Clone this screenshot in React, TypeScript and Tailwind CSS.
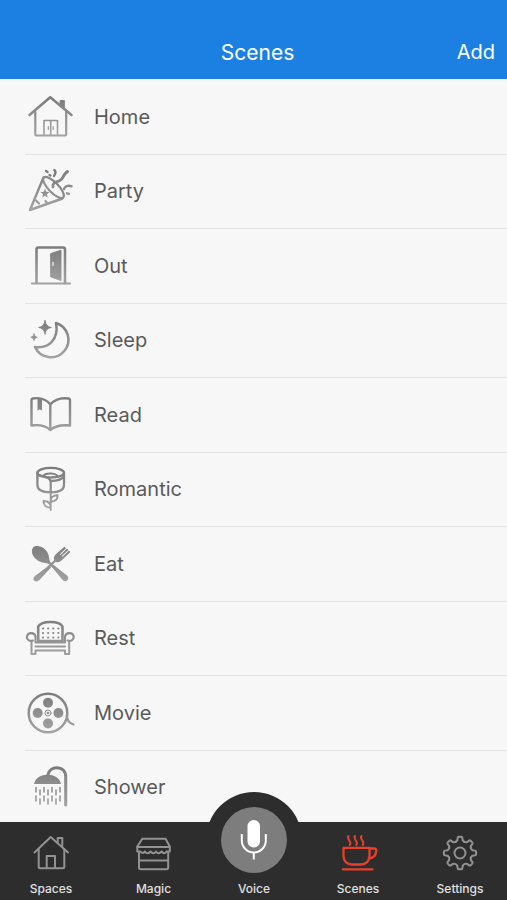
import type { ReactNode } from "react";

interface Item {
  name: string;
  icon: ReactNode;
}

const DROPS_HIGH = [11, 19, 27, 35];
const DROPS_LOW = [15, 23, 31];

// eight rounded teeth around a 40x40 box
function gearPath() {
  const at = (r: number, deg: number) => {
    const a = ((deg - 90) * Math.PI) / 180;
    return `${(20 + r * Math.cos(a)).toFixed(2)} ${(20 + r * Math.sin(a)).toFixed(2)}`;
  };
  let d = `M${at(13, -12)}`;
  for (let i = 0; i < 8; i++) {
    const c = i * 45;
    d += `L${at(15.2, c - 9)}Q${at(16.2, c - 8)} ${at(16.2, c - 4)}L${at(16.2, c + 4)}`;
    d += `Q${at(16.2, c + 8)} ${at(15.2, c + 9)}L${at(13, c + 12)}Q${at(10.8, c + 22.5)} ${at(13, c + 33)}`;
  }
  return d + "Z";
}

const scenes: Item[] = [
  {
    name: "Home",
    icon: (
      <>
        <path d="M4.500 23 25.200 5.300 46.500 23" strokeWidth="2.600" />
        <path d="M10.300 20V42Q10.300 43.500 11.800 43.500H39.700Q41.200 43.500 41.200 42V20" />
        <path d="M35.500 9H39V16L35.500 13Z" fill="url(#metal)" strokeWidth="1.800" />
        <path d="M19 43V28.500H32.500V43M25.700 29V43" strokeWidth="1.600" />
        <path d="M23.300 34.500V37.500M28.100 34.500V37.500" strokeWidth="1.200" />
      </>
    ),
  },
  {
    name: "Party",
    icon: (
      <>
        <path d="M18.500 11.500 5 44 37.500 32.500" strokeWidth="2.400" />
        <ellipse cx="28.500" cy="21.500" rx="14" ry="5" transform="rotate(46 28.500 21.500)" strokeWidth="2.200" />
        <path d="M28 21C27 15 33 16.500 35.500 14C39 12 37 9.500 42.500 5.500" strokeWidth="2.800" />
        <path d="M29.300 4C31.800 6 30 8.500 29 10M39 23C40 20 43 19 46.500 20.300M21 5 22.500 6M24.500 9 25.500 9.500M42 27.300 44 27.800" strokeWidth="2.400" />
        <path d="M20 22.500 21.200 25.700 24.500 26 21.900 28.200 22.700 31.500 20 29.700 17.200 31.500 18.100 28.200 15.500 26 18.800 25.700Z" fill="url(#metal)" stroke="none" />
        <path d="M11 34.500 14 37.500M20.500 35 22.500 37.500" strokeWidth="2.200" />
      </>
    ),
  },
  {
    name: "Out",
    icon: (
      <>
        <path d="M11.500 42V8.500Q11.500 6.500 13.500 6.500H38Q40 6.500 40 8.500V42" strokeWidth="2.600" />
        <path d="M7 42.500H45" strokeWidth="2.200" />
        <path d="M26 12.500 36 9.200V39.500L26 36Z" fill="url(#metal)" strokeWidth="1" />
        <path d="M28 21.500V24.500" stroke="#e5e5e5" strokeWidth="1.500" />
      </>
    ),
  },
  {
    name: "Sleep",
    icon: (
      <>
        <path d="M31 8A17.500 17.500 0 1 1 10 32C24 34 34 24 31 8Z" strokeWidth="2.500" />
        <path d="M20 5.500Q20.700 11.800 26.500 12.500Q20.700 13.200 20 19.500Q19.300 13.200 13.500 12.500Q19.300 11.800 20 5.500ZM9 19Q9.300 22 12.200 22.300Q9.300 22.600 9 25.600Q8.700 22.600 5.800 22.300Q8.700 22 9 19Z" fill="url(#metal)" strokeWidth=".8" />
      </>
    ),
  },
  {
    name: "Read",
    icon: (
      <>
        <path d="M25.300 14.500C21 9 14 7.500 7.800 8.500Q6.500 8.800 6.500 10V35.500C14 34.500 21 36 25.300 40C30 36 37 34.500 45 35.500V10Q45 8.800 43.700 8.500C37 7.500 30 9 25.300 14.500V39" strokeWidth="2.400" />
        <path d="M12.500 9H17V20.800L14.800 19.300L12.500 20.800Z" fill="url(#metal)" stroke="none" />
      </>
    ),
  },
  {
    name: "Romantic",
    icon: (
      <>
        <ellipse cx="25.700" cy="8.700" rx="13.300" ry="4.800" strokeWidth="2.300" />
        <path d="M12.400 9V21C12.400 25.500 17 28.300 25.700 28.300S39 25.500 39 21V9M12.400 10.500C17 13 25.700 12 25.700 18.500V28M39 11.500C37 16 30 17 26 17" strokeWidth="2.300" />
        <path d="M18.500 11.500C21 8.500 31.500 8.500 33 13" strokeWidth="2" />
        <path d="M25.700 28V46M25.700 37.500C25.500 33.500 28 31.300 32.600 31.300C32.800 35.500 30 37.800 25.700 37.500ZM25.700 43.500C21.500 44 18.500 41.500 18.500 37C23 37 25.700 39 25.700 43.500Z" strokeWidth="1.900" />
      </>
    ),
  },
  {
    name: "Eat",
    icon: (
      <>
        <path d="M8 8.500C12.500 5 19.500 8.500 22.500 13.500C24.500 17 23.500 20 25.500 23.500L24 25C20.500 23.300 17.500 24 14 22.200C8.500 19.500 5 13 8 8.500Z" fill="url(#metal)" stroke="none" />
        <path d="M24 23.500 28.500 28M31 21 23.500 28" strokeWidth="2.200" />
        <path d="M28 25.500 42 36.500Q44.500 39.500 42 41.500Q39.500 43.300 37 40.300L26.500 27.500ZM24 26.500 10 37Q7.200 39.500 9.200 41.800Q12 43.500 14.500 41L26 28.500Z" fill="url(#metal)" stroke="none" />
        <path d="M39.500 7.800 31 15Q28 18 29.300 21.200L31.200 23Q34 24 37 21L45.300 13 44 11.600 37.500 17.800 36.800 17.100 43.300 10.900 42 9.600 35.600 15.900 34.900 15.200 40.900 9.200Z" fill="url(#metal)" stroke="none" />
      </>
    ),
  },
  {
    name: "Rest",
    icon: (
      <>
        <path d="M13.200 28V13.500C15 10.500 19 9 25.300 9S36 10.500 37.500 13.500V28Z" strokeWidth="2.600" />
        <path d="M8 27.500C4 29 1.500 26 2 23.300C3 19 9.500 19 10.500 23.500V29.500H40V23.500C41 19 47.500 19 48.700 23.300C49 26 46.500 29 42.500 27.500" strokeWidth="2.100" />
        <path d="M6.500 28V41H10.500V37.500H40V41H44.200V28M10.500 33.500H40" strokeWidth="2" />
        <path d="M18 15.500H33.500M18 20H33.500M18 24.500H33.500" strokeWidth="2.200" strokeDasharray=".100 5" />
      </>
    ),
  },
  {
    name: "Movie",
    icon: (
      <>
        <circle cx="23" cy="25" r="19.300" strokeWidth="2.500" />
        <g fill="url(#metal)" stroke="none">
          <circle cx="23" cy="14.800" r="5" />
          <circle cx="12.700" cy="25" r="5" />
          <circle cx="33.400" cy="25" r="5" />
          <circle cx="23" cy="35.400" r="5" />
          <circle cx="23" cy="25" r="1.300" />
        </g>
        <circle cx="23" cy="25" r="3" strokeWidth="1" />
        <path d="M41.800 27C42 32 45 35.500 48.500 36.500" strokeWidth="2.200" />
      </>
    ),
  },
  {
    name: "Shower",
    icon: (
      <>
        <path d="M9 22C10.500 15.500 16 12.700 22.500 12.700S34.500 15.500 36 22Z" fill="url(#metal)" stroke="none" />
        <path d="M22.800 13C24 8 28 5.800 31.500 5.800C37 5.800 40.700 9 40.700 15V43" strokeWidth="3" />
        {DROPS_HIGH.map((x) => (
          <path key={x} d={`M${x} 25.500V30M${x} 34V39`} strokeWidth="1.600" />
        ))}
        {DROPS_LOW.map((x) => (
          <path key={x} d={`M${x} 28V33M${x} 37V42`} strokeWidth="1.600" />
        ))}
      </>
    ),
  },
];

const spacesIcon = (
  <>
    <path d="M3.500 19.500 19.700 4 37 19.500" />
    <path d="M7.700 16V33.800Q7.700 35.300 9.200 35.300H31.800Q33.300 35.300 33.300 33.800V16M26.700 9.500V5H31.300V13.500M15.700 35V23H24V35" />
  </>
);

const magicIcon = (
  <>
    <path d="M8.300 5.800H31.500L35.800 13.500V18.500H32.500Q30.500 22 27.500 18.500Q24.500 22 22 18.500Q19.500 22 16.500 18.500Q13.500 22 11 18.500Q8.500 21.500 6.500 18.500H3.300V13.500Z" />
    <path d="M3.500 14H35.500M5 19V34.500Q5 36.300 6.800 36.300H32.300Q34.200 36.300 34.200 34.500V19M5 27.500H34" />
  </>
);

const cupIcon = (
  <>
    <path d="M5.500 14.800H31.500V23C31.500 28 28 31.500 23 31.500H14C9 31.500 5.500 28 5.500 23ZM31.500 15.500H36Q38.500 15.500 38.300 18C37.800 22.500 35 25.300 30.800 25.500M5 36.300H34.500" strokeWidth="2.300" />
    <path d="M10.500 3C8 6 14.500 8.500 11.800 12M17 3C14.500 6 21 8.500 18.300 12M23.500 3C21 6 27.500 8.500 24.800 12" />
  </>
);

const settingsIcon = (
  <>
    <path d={gearPath()} />
    <circle cx="20" cy="20" r="5.500" />
  </>
);

export default function App() {
  return (
    <div className="flex h-screen flex-col bg-[#f7f7f7] font-['Inter','Liberation_Sans',sans-serif]">
      <header className="grid shrink-0 grid-cols-3 items-center bg-[#1c80e2] pt-[37px] pr-3 pb-[11px] pl-5 text-white">
        <h1 className="col-start-2 text-center text-[21px] leading-[31px]">Scenes</h1>
        <button type="button" className="justify-self-end text-xl leading-[31px]">
          Add
        </button>
      </header>

      <main className="min-h-0 flex-1 overflow-y-auto [scrollbar-width:none]">
        <svg className="absolute size-0" aria-hidden="true">
          <defs>
            <linearGradient id="metal" gradientUnits="userSpaceOnUse" x1="0" y1="5" x2="0" y2="45">
              <stop offset="0" stopColor="#7c7c7c" />
              <stop offset="1" stopColor="#a4a4a4" />
            </linearGradient>
          </defs>
        </svg>
        <ul className="grid min-h-[746px] auto-rows-fr pt-px pl-[25px]">
          {scenes.map((scene) => (
            <li key={scene.name} className="flex border-b border-[#e3e3e3]">
              <button type="button" className="flex w-full items-center gap-[19px] text-left">
                <SceneIcon>{scene.icon}</SceneIcon>
                <span className="text-xl text-[#5a5a5a]">{scene.name}</span>
              </button>
            </li>
          ))}
        </ul>
      </main>

      <nav className="relative grid shrink-0 grid-cols-[102fr_103fr_98fr_110fr_94fr] bg-[#2d2d2d] text-[#e0e0e0]">
        <Tab name="Spaces" icon={spacesIcon} />
        <Tab name="Magic" icon={magicIcon} />
        <button type="button" className="relative flex flex-col items-center justify-end pb-[3px]">
          <span className="absolute -top-[30px] left-1/2 flex size-24 -translate-x-1/2 items-center justify-center rounded-full bg-[#2d2d2d]">
            <span className="size-[66px] rounded-full bg-[#7d7d7d]">
              <svg viewBox="0 0 66 66" className="size-full" fill="none" stroke="#fff" aria-hidden="true">
                <rect x="26.500" y="13" width="12.500" height="27.500" rx="6.250" fill="#fff" stroke="none" />
                <path d="M20.800 27V33.500A12 12 0 0 0 44.800 33.500V27M32.800 45.500V52.500" strokeWidth="2" />
              </svg>
            </span>
          </span>
          <span className="relative text-xs leading-4 font-medium">Voice</span>
        </button>
        <Tab name="Scenes" icon={cupIcon} active />
        <Tab name="Settings" icon={settingsIcon} />
      </nav>
    </div>
  );
}

function SceneIcon({ children }: { children: ReactNode }) {
  return (
    <svg
      viewBox="0 0 50 50"
      className="size-[50px] shrink-0"
      fill="none"
      strokeWidth="2.200"
      strokeLinecap="round"
      strokeLinejoin="round"
      aria-hidden="true"
    >
      {/* a flat line has no box of its own, so the gradient runs in user space */}
      <g stroke="url(#metal)">{children}</g>
    </svg>
  );
}

function Tab({ name, icon, active }: { name: string; icon: ReactNode; active?: boolean }) {
  return (
    <button type="button" className="flex flex-col items-center gap-2 pt-[11px] pb-[3px]">
      <svg
        viewBox="0 0 40 40"
        className={active ? "size-10 text-[#e8402c]" : "size-10 text-[#929292]"}
        fill="none"
        stroke="currentColor"
        strokeWidth="2"
        strokeLinecap="round"
        strokeLinejoin="round"
        aria-hidden="true"
      >
        {icon}
      </svg>
      <span className="text-xs leading-4 font-medium">{name}</span>
    </button>
  );
}
